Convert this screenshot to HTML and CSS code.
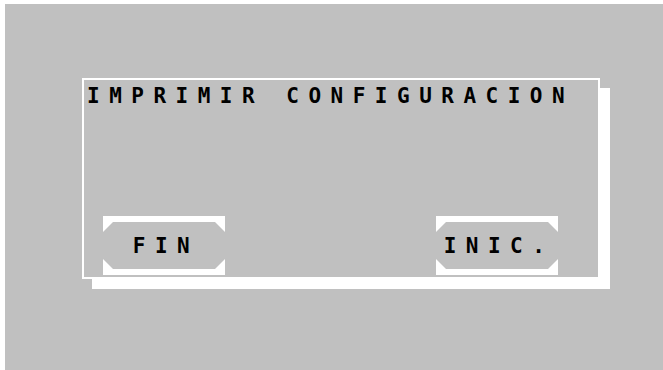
FILE: index.html
```html
<!DOCTYPE html>
<html>
<head>
<meta charset="utf-8">
<link rel="stylesheet" href="styles.css">
</head>
<body>
<div class="screen">
  <div class="dialog">
    <div class="title">IMPRIMIR CONFIGURACION</div>
    <div class="actions">
      <div class="btn"><div class="btn-face">FIN</div></div>
      <div class="btn"><div class="btn-face">INIC.</div></div>
    </div>
  </div>
</div>
</body>
</html>
```
FILE: styles.css
```css
html, body {
  margin: 0;
  padding: 0;
  background: #ffffff;
}
body {
  padding: 4px 0 0 5px;
  overflow: hidden;
}
.screen {
  background: #c0c0c0;
  height: 366px;
  box-sizing: border-box;
  padding: 74px 0 0 77px;
  font-family: "DejaVu Sans Mono", "Liberation Mono", monospace;
  font-weight: bold;
  color: #000;
}
.dialog {
  width: 518px;
  height: 201px;
  box-sizing: border-box;
  border: 2px solid #ffffff;
  box-shadow: 10px 10px 0 #ffffff;
  display: flex;
  flex-direction: column;
}
.title {
  font-size: 21px;
  line-height: 21px;
  letter-spacing: 9.5px;
  padding: 6px 0 0 3px;
  white-space: nowrap;
}
.actions {
  margin-top: auto;
  display: flex;
  justify-content: space-between;
  padding: 0 40px 2px 19px;
}
.btn {
  width: 122px;
  height: 59px;
  box-sizing: border-box;
  background: #ffffff;
  padding: 6px 0;
}
.btn-face {
  height: 100%;
  background: #c0c0c0;
  clip-path: polygon(10px 0, calc(100% - 10px) 0, 100% 10px, 100% calc(100% - 10px), calc(100% - 10px) 100%, 10px 100%, 0 calc(100% - 10px), 0 10px);
  display: flex;
  align-items: center;
  justify-content: center;
  font-size: 21px;
  letter-spacing: 9.5px;
  padding-left: 4px;
  box-sizing: border-box;
}
```
